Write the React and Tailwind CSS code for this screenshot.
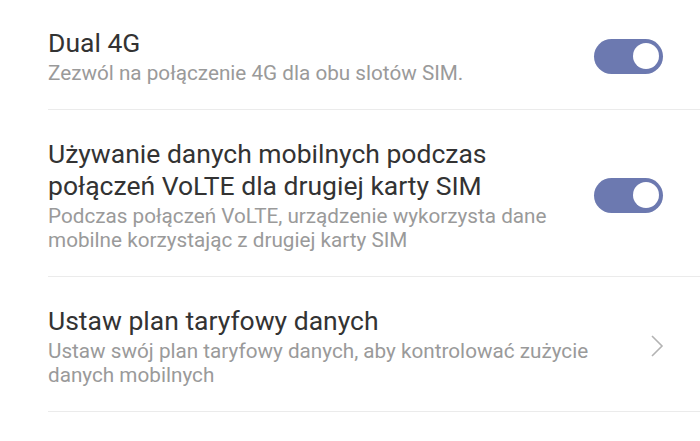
import React from "react";

function Toggle() {
  return (
    <div className="w-[69px] h-[35px] rounded-full bg-[#6c79b0] flex items-center justify-end pr-[4px] shrink-0">
      <div className="w-[26px] h-[26px] rounded-full bg-white" />
    </div>
  );
}

function Chevron() {
  return (
    <svg width="14" height="24" viewBox="0 0 14 24" className="shrink-0 mr-[-1px]">
      <path d="M2 2 L12 12 L2 22" fill="none" stroke="#b3b3b3" strokeWidth="1.6" />
    </svg>
  );
}

function Row({ title, subtitle, right, first }) {
  return (
    <div className={`ml-[48px] border-b border-[#ebebeb] pr-[37px] flex items-center justify-between ${first ? "pt-[27px]" : "pt-[28px]"} pb-[24px]`}>
      <div className="flex flex-col">
        <div className="text-[26.5px] leading-[32px] text-[#333333]">{title}</div>
        <div className="text-[20.7px] leading-[24px] text-[#9a9a9a] mt-[2px]">{subtitle}</div>
      </div>
      {right}
    </div>
  );
}

export default function App() {
  return (
    <div className="w-[700px] h-[441px] bg-white overflow-hidden" style={{ fontFamily: "Roboto, 'Noto Sans', sans-serif" }}>
      <Row
        first
        title="Dual 4G"
        subtitle="Zezwól na połączenie 4G dla obu slotów SIM."
        right={<Toggle />}
      />
      <Row
        title={<>Używanie danych mobilnych podczas<br />połączeń VoLTE dla drugiej karty SIM</>}
        subtitle={<>Podczas połączeń VoLTE, urządzenie wykorzysta dane<br />mobilne korzystając z drugiej karty SIM</>}
        right={<Toggle />}
      />
      <Row
        title="Ustaw plan taryfowy danych"
        subtitle={<>Ustaw swój plan taryfowy danych, aby kontrolować zużycie<br />danych mobilnych</>}
        right={<Chevron />}
      />
    </div>
  );
}
